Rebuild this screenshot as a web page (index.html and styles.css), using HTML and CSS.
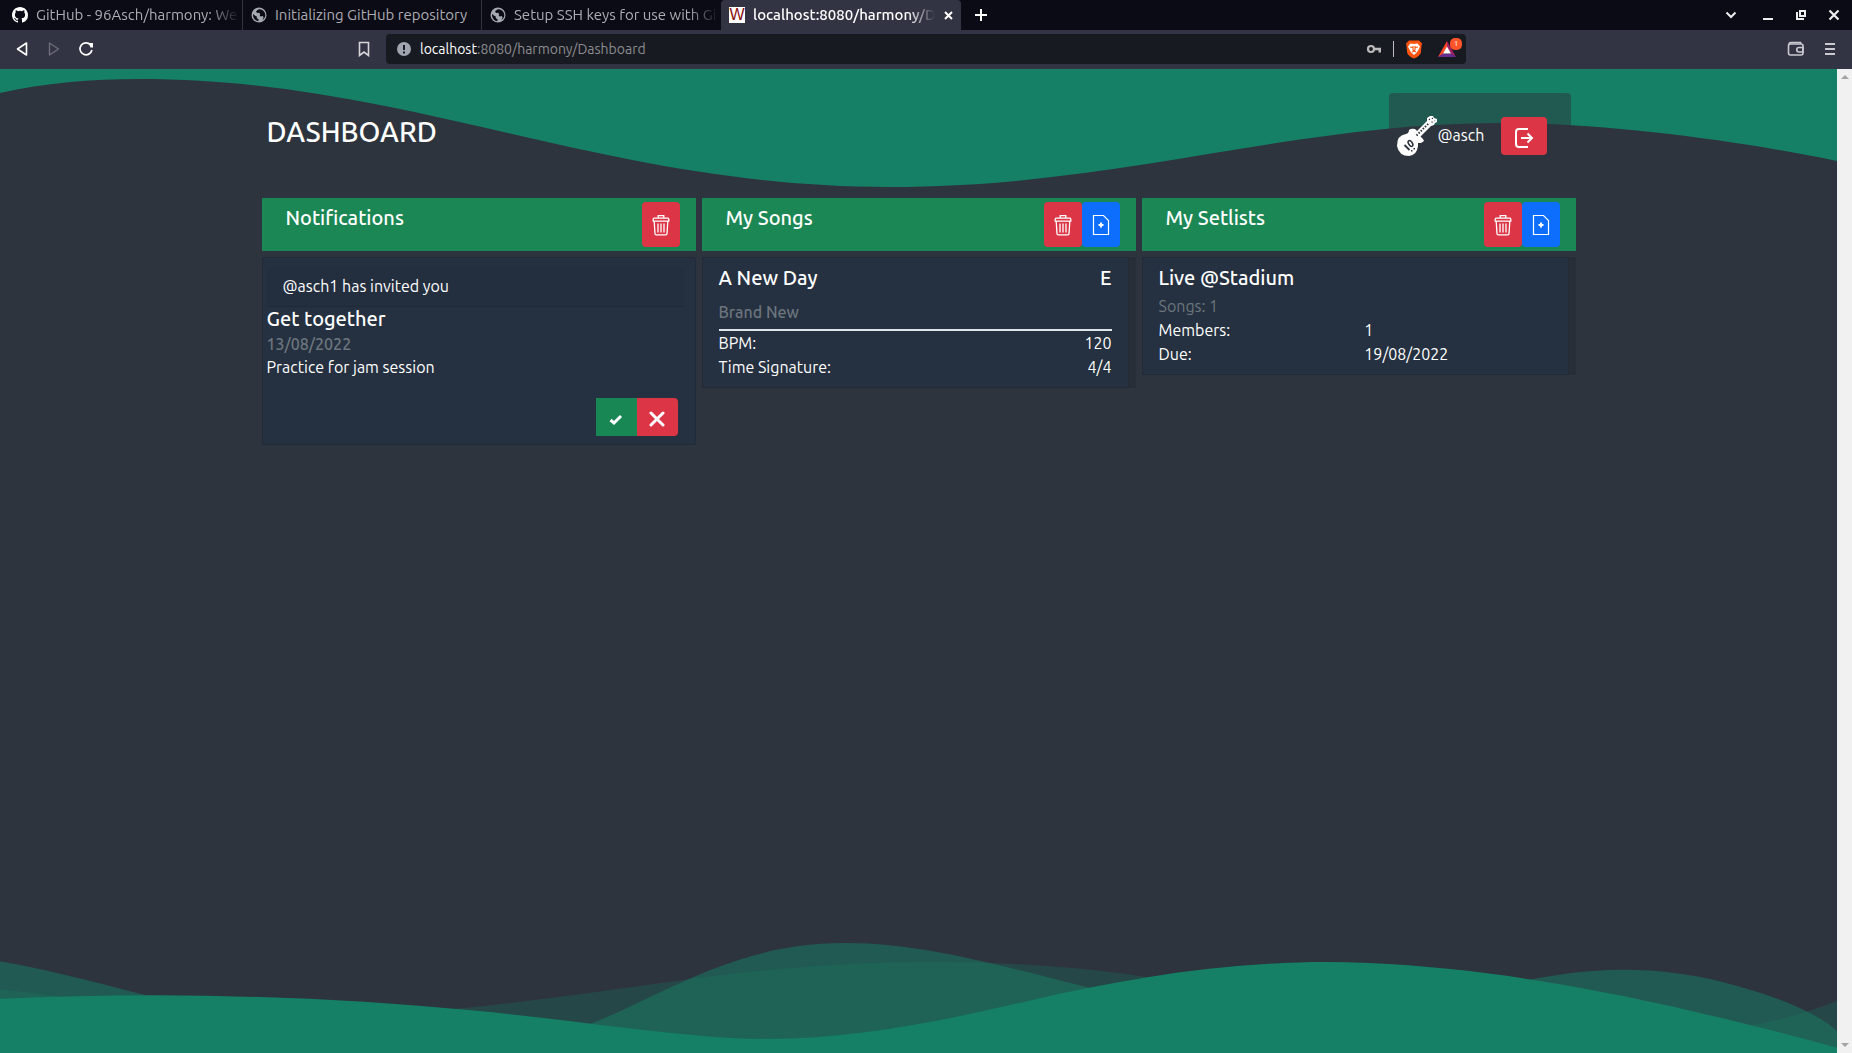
FILE: index.html
```html
<!DOCTYPE html>
<html lang="en">
<head>
<meta charset="utf-8">
<title>localhost:8080/harmony/Dashboard</title>
<link rel="stylesheet" href="styles.css">
</head>
<body>
<svg class="sprite" aria-hidden="true">
  <symbol id="globe" viewBox="0 0 16 16"><circle cx="8" cy="8" r="7.5" fill="#a4a8b2"/><path fill="#0b0b15" d="M8.500 2.200C7 2.500 5.300 3.600 5 4.800L6.300 6.100L8.200 5.700L9.200 7.200L8.700 8.700L10 9.600L11.800 9L12.600 10.400L11.500 12.900C13.300 11.700 14.300 9.900 14.300 8C14.300 5.100 12 2.400 8.500 2.200ZM2 7C1.700 10.700 4 13.600 7.300 14.300L7.500 12.300L5.800 11.200L5.800 9.500L4.200 8.800Z"/></symbol>
  <symbol id="trash" viewBox="0 0 20 24"><g fill="none" stroke="#fff" stroke-width="1.300"><path d="M3.200 8.500L4 20.800Q4.100 21.800 5.200 21.800H14.800Q15.900 21.800 16 20.800L16.800 8.500M3 5.200H17Q17.800 5.200 17.800 6.200V8.200H2.200V6.200Q2.200 5.200 3 5.200ZM7.200 5V2.700H12.800V5M7 10.500V19.500M10 10.500V19.500M13 10.500V19.500"/></g></symbol>
  <symbol id="newfile" viewBox="0 0 20 24"><path fill="none" stroke="#fff" stroke-width="1.200" d="M2.500 2.500H12.500L17.500 7.500V21.500H2.500Z"/><path stroke="#fff" stroke-width="2" d="M7.500 12H12.500M10 9.500V14.500"/></symbol>
</svg>
<div class="browser">
  <nav class="tabs" aria-label="Browser tabs">
    <button class="tab"><svg width="16" height="16" viewBox="0 0 16 16"><path fill="#fff" d="M8 0C3.580 0 0 3.580 0 8c0 3.540 2.290 6.530 5.470 7.590.4.070.55-.17.55-.38 0-.19-.01-.82-.01-1.490-2.010.37-2.530-.49-2.690-.94-.09-.23-.48-.94-.82-1.130-.28-.15-.68-.52-.01-.53.63-.01 1.080.58 1.230.82.72 1.210 1.870.87 2.330.66.07-.52.28-.87.51-1.070-1.780-.2-3.640-.89-3.640-3.950 0-.87.31-1.590.82-2.150-.08-.2-.36-1.020.08-2.120 0 0 .67-.21 2.200.82a7.600 7.600 0 0 1 4 0c1.530-1.040 2.200-.82 2.200-.82.44 1.100.16 1.920.08 2.120.51.56.82 1.270.82 2.150 0 3.070-1.870 3.750-3.650 3.950.29.25.54.73.54 1.480 0 1.070-.01 1.930-.01 2.200 0 .21.15.46.55.38A8 8 0 0 0 16 8c0-4.420-3.580-8-8-8Z"/></svg><span class="fade">GitHub - 96Asch/harmony: We</span></button>
    <button class="tab"><svg width="16" height="16"><use href="#globe"/></svg><span>Initializing GitHub repository</span></button>
    <button class="tab last"><svg width="16" height="16"><use href="#globe"/></svg><span class="fade">Setup SSH keys for use with Gi</span></button>
    <button class="tab active"><i class="wicon">W</i><span class="fade">localhost:8080/harmony/D</span><svg width="11" height="11" viewBox="0 0 11 11" stroke="#fff" stroke-width="2"><path d="M2 2L9 9M9 2L2 9"/></svg></button>
    <button class="icon-btn plus" aria-label="New tab"><svg width="12" height="12" viewBox="0 0 12 12" stroke="#fff" stroke-width="2"><path d="M6 0V12M0 6H12"/></svg></button>
    <div class="window-controls">
      <button class="icon-btn" aria-label="Search tabs"><svg width="12" height="12" viewBox="0 0 12 12" fill="none" stroke="#eee" stroke-width="2"><path d="M1.500 3.500L6 8L10.500 3.500"/></svg></button>
      <button class="icon-btn" aria-label="Minimize"><svg width="12" height="12" viewBox="0 0 12 12"><path fill="#eee" d="M1 9H11V11H1Z"/></svg></button>
      <button class="icon-btn" aria-label="Restore"><svg width="12" height="12" viewBox="0 0 12 12" fill="none" stroke="#eee" stroke-width="2"><path d="M5 2H10V7H5ZM2 3V10H9"/></svg></button>
      <button class="icon-btn" aria-label="Close"><svg width="12" height="12" viewBox="0 0 12 12" stroke="#eee" stroke-width="2.200"><path d="M1.500 1.500L10.500 10.500M10.500 1.500L1.500 10.500"/></svg></button>
    </div>
  </nav>
  <div class="toolbar">
    <div class="nav-buttons">
      <button class="icon-btn" aria-label="Back"><svg width="16" height="16" viewBox="0 0 16 16" fill="none" stroke="#fff" stroke-width="1.600" stroke-linejoin="round"><path d="M12.500 2V14L3.500 8Z"/></svg></button>
      <button class="icon-btn" aria-label="Forward"><svg width="16" height="16" viewBox="0 0 16 16" fill="none" stroke="#6c6d78" stroke-width="1.400" stroke-linejoin="round"><path d="M3.500 2V14L12.500 8Z"/></svg></button>
      <button class="icon-btn" aria-label="Reload"><svg width="16" height="16" viewBox="0 0 16 16" fill="none" stroke="#fff" stroke-width="1.700"><path d="M12.500 3.800A6 6 0 1 0 13.900 9"/><path fill="#fff" stroke="none" d="M10.500 2H15V6.500H12.500Z"/></svg></button>
    </div>
    <button class="icon-btn bookmark" aria-label="Bookmark"><svg width="16" height="16" viewBox="0 0 16 16" fill="none" stroke="#d5d5da" stroke-width="1.600"><path d="M3.500 1.500H12.500V14.500L8 11L3.500 14.500Z"/></svg></button>
    <div class="address">
      <svg width="14" height="14" viewBox="0 0 14 14"><circle cx="7" cy="7" r="7" fill="#a0a4ae"/><path fill="#181a21" d="M6 3H8V8H6ZM6 9.500H8V11.500H6Z"/></svg>
      <div class="url"><b>localhost</b>:8080/harmony/Dashboard</div>
      <div class="address-icons">
        <svg width="16" height="16" viewBox="0 0 16 16"><circle cx="5" cy="8" r="3" fill="none" stroke="#bbb" stroke-width="2.200"/><path fill="#bbb" d="M8 6.800H15V11.500H12.500V9.200H8Z"/></svg>
        <span class="divider"></span>
        <svg width="18" height="20" viewBox="0 0 18 20"><path fill="#fb5410" d="M4 1.500H14L17 4.500L16.500 7L15.800 14Q14 17.500 9 19.500Q4 17.500 2.200 14L1.500 7L1 4.500Z"/><path fill="#fff" d="M5.500 4.500L9 5L12.500 4.500L15 7.500L12.800 12L11.200 14L9 16L6.800 14L5.200 12L3 7.500Z"/><path fill="none" stroke="#fb5410" stroke-width="1.100" d="M5 8L7.500 8.500M13 8L10.500 8.500M8 7V11L9 12L10 11V7M7 13L9 12L11 13"/></svg>
        <span class="bat"><svg width="20" height="18" viewBox="0 0 20 18"><path fill="#ff4724" d="M10 1L1 17L6 14L10 7Z"/><path fill="#9e1f63" d="M10 1L19 17L14 14L10 7Z"/><path fill="#662d91" d="M1 17H19L14 13.500H6Z"/><path fill="#fff" d="M10 6.500L14 13.500H6Z"/></svg><span class="badge">1</span></span>
      </div>
    </div>
    <div class="menu">
      <button class="icon-btn" aria-label="Wallet"><svg width="18" height="16" viewBox="0 0 18 16" fill="none" stroke="#c9c9d0" stroke-width="1.600"><rect x="1.500" y="3" width="14.500" height="11" rx="2"/><path d="M2 4Q2 1.500 4 1.500H13.500V3M16 6.500H12A2.200 2.200 0 0 0 12 11H16Z"/></svg></button>
      <button class="icon-btn" aria-label="Menu"><svg width="16" height="14" viewBox="0 0 16 14"><path fill="#c9c9d0" d="M3 1H13V3H3ZM3 6H13V8H3ZM3 11H13V13H3Z"/></svg></button>
    </div>
  </div>
</div>
<div class="viewport">
  <main class="page">
    <svg class="wave wave-top" viewBox="0 0 1837 120" preserveAspectRatio="none" fill="#158065"><path d="M0 0V24C45 14 90 10 140 10C410 10 600 118 890 118C1120 118 1290 54 1500 54C1610 54 1740 72 1837 92V0Z"/></svg>
    <svg class="wave wave-bottom" viewBox="0 0 1200 120" preserveAspectRatio="none" fill="#158065"><path opacity=".25" d="M0,0V46.290c47.790,22.200,103.590,32.170,158,28,70.360-5.370,136.330-33.310,206.800-37.500C438.640,32.430,512.340,53.670,583,72.050c69.270,18,138.300,24.880,209.400,13.080,36.150-6,69.850-17.840,104.450-29.340C989.490,25,1113-14.290,1200,52.470V0Z"/><path opacity=".5" d="M0,0V15.810C13,36.920,27.640,56.860,47.690,72.050,99.410,111.270,165,111,224.580,91.580c31.150-10.150,60.090-26.070,89.670-39.800,40.920-19,84.730-46,130.830-49.670,36.260-2.850,70.900,9.420,98.600,31.560,31.770,25.390,62.320,62,103.630,73,40.440,10.790,81.350-6.690,119.130-24.280s75.160-39,116.920-43.050c59.730-5.850,113.280,22.880,168.900,38.840,30.200,8.660,59,6.170,87.090-7.500,22.430-10.890,48-26.930,60.650-49.240V0Z"/><path d="M0,0V5.630C149.930,59,314.090,71.320,475.830,42.570c43-7.640,84.230-20.120,127.610-26.460,59-8.630,112.480,12.240,165.560,35.400C827.930,77.220,886,95.240,951.200,90c86.530-7,172.070-45.710,248.800-84.810V0Z"/></svg>
    <div class="container">
      <header class="top">
        <h1>DASHBOARD</h1>
        <div class="user">
          <svg width="40" height="40" viewBox="0 0 40 40"><path fill="#fff" d="M33 0L36 0L37 2L40 3L40 6L38 7L37 9L34 10L23.500 20.500L26 23L27 25L24 27L21 27L21 30Q20 39 12 40Q2 40 0 30Q0 19 9 18Q12 17 12 14Q14 12 18 13L20 15L30 5L30 2Z"/><path stroke="#2d343e" stroke-width="2" stroke-dasharray="1.500 1.500" d="M19.500 19.500L31.500 7.500"/><path stroke="#2d343e" stroke-width="1.200" stroke-dasharray="1.200 2.500" d="M32 3L37 8M35 2L38 5"/><path stroke="#2d343e" stroke-width="1.800" d="M7.500 29L12.500 34"/><ellipse cx="13.500" cy="27.500" rx="1.800" ry="3.200" transform="rotate(-35 13.500 27.500)" fill="none" stroke="#2d343e" stroke-width="1.500"/><path fill="#2d343e" d="M14 34H15.500V35.500H14ZM16.500 32H18V33.500H16.500Z"/></svg>
          <span>@asch</span>
          <button class="btn red logout" aria-label="Log out"><svg width="20" height="22" viewBox="0 0 20 22" fill="none" stroke="#fff" stroke-width="2"><path d="M14 2H5Q2 2 2 5V17Q2 20 5 20H14M7 11H18M13.500 6.500L18 11L13.500 15.500"/></svg></button>
        </div>
      </header>
      <div class="columns">
        <section>
          <div class="col-head"><h2>Notifications</h2><button class="btn red" aria-label="Delete notifications"><svg width="20" height="24"><use href="#trash"/></svg></button></div>
          <article class="card notice">
            <p class="invite">@asch1 has invited you</p>
            <h3>Get together</h3>
            <p class="muted date">13/08/2022</p>
            <p class="desc">Practice for jam session</p>
            <div class="actions"><button class="btn green" aria-label="Accept"><svg width="14" height="14" viewBox="0 0 14 14" fill="none" stroke="#fff" stroke-width="3"><path d="M1.500 8L5 11L12 4"/></svg></button><button class="btn red" aria-label="Decline"><svg width="16" height="16" viewBox="0 0 16 16" stroke="#fff" stroke-width="3" stroke-linecap="round"><path d="M2 2L14 14M14 2L2 14"/></svg></button></div>
          </article>
        </section>
        <section>
          <div class="col-head"><h2>My Songs</h2><button class="btn red" aria-label="Delete songs"><svg width="20" height="24"><use href="#trash"/></svg></button><button class="btn blue" aria-label="Add song"><svg width="20" height="24"><use href="#newfile"/></svg></button></div>
          <div class="slot"><article class="card song">
            <h3><span>A New Day</span><span>E</span></h3>
            <p class="muted artist">Brand New</p>
            <dl><dt>BPM:</dt><dd>120</dd><dt>Time Signature:</dt><dd>4/4</dd></dl>
          </article></div>
        </section>
        <section>
          <div class="col-head"><h2>My Setlists</h2><button class="btn red" aria-label="Delete setlists"><svg width="20" height="24"><use href="#trash"/></svg></button><button class="btn blue" aria-label="Add setlist"><svg width="20" height="24"><use href="#newfile"/></svg></button></div>
          <div class="slot"><article class="card setlist">
            <h3>Live @Stadium</h3>
            <p class="muted">Songs: 1</p>
            <dl><dt>Members:</dt><dd>1</dd><dt>Due:</dt><dd>19/08/2022</dd></dl>
          </article></div>
        </section>
      </div>
    </div>
  </main>
  <div class="scrollbar" aria-hidden="true"><svg width="8" height="4" viewBox="0 0 8 4"><path fill="#a3a3a3" d="M0 4L4 0L8 4Z"/></svg><svg width="8" height="4" viewBox="0 0 8 4"><path fill="#a3a3a3" d="M0 0L4 4L8 0Z"/></svg></div>
</div>
</body>
</html>
```
FILE: styles.css
```css
* { box-sizing: border-box; }
body {
  margin: 0;
  height: 100vh;
  display: flex;
  flex-direction: column;
  overflow: hidden;
  font-family: Ubuntu, "Noto Sans", sans-serif;
  font-size: 16px;
  line-height: 24px;
  color: #fff;
  background: #2d343e;
}
h1, h2, h3, p, dl, dd { margin: 0; }
h1, h2, h3 { font-weight: 500; }
button { border: 0; padding: 0; background: none; color: inherit; font: inherit; }
svg { display: block; flex: none; }
.sprite { position: absolute; width: 0; height: 0; }

/* browser chrome */
.tabs { display: flex; height: 30px; background: #0b0b15; }
.tab {
  display: flex;
  align-items: center;
  gap: 8px;
  flex: 0 1 239px;
  min-width: 0;
  padding: 0 2px 0 8px;
  border-right: 1px solid #33343c;
  font-size: 15px;
  color: #adadb3;
}
.tab:first-child { flex-basis: 243px; padding-left: 12px; }
.tab.last { border-right: 0; }
.tab span { flex: 1; overflow: hidden; white-space: nowrap; text-align: left; }
.fade { -webkit-mask-image: linear-gradient(to right, #000 85%, transparent); mask-image: linear-gradient(to right, #000 85%, transparent); }
.tab.active {
  flex-basis: 240px;
  padding-right: 7px;
  border: 0;
  border-radius: 4px 4px 0 0;
  background: #323443;
  color: #fff;
  font-weight: 500;
}
.wicon {
  width: 16px;
  height: 16px;
  background: #fff;
  color: #8b1010;
  font: 16px/16px "Liberation Sans", sans-serif;
  text-align: center;
}
.icon-btn { display: flex; align-items: center; justify-content: center; }
.plus { width: 40px; }
.window-controls { display: flex; gap: 21px; margin-left: auto; padding-right: 12px; }
.window-controls .icon-btn:first-child { margin-right: 4px; }
.toolbar { display: flex; align-items: center; height: 39px; padding: 0 8px 1px; background: #323443; }
.nav-buttons { display: flex; gap: 16px; padding-left: 6px; }
.bookmark { margin-left: 262px; }
.address {
  display: flex;
  align-items: center;
  gap: 9px;
  flex: 0 1 1080px;
  height: 30px;
  margin: 0 auto 0 14px;
  padding: 0 4px 0 11px;
  border-radius: 4px;
  background: #181a21;
}
.url { flex: 1; font-size: 14px; color: #8c8d90; }
.url b { font-weight: 400; color: #fff; }
.address-icons { display: flex; align-items: center; gap: 11px; }
.divider { width: 1px; height: 16px; background: #c0c0c4; }
.bat { position: relative; width: 28px; padding-left: 3px; }
.badge {
  position: absolute;
  top: -2px;
  right: 0;
  width: 12px;
  height: 12px;
  border-radius: 5px;
  background: #fb542b;
  font-size: 8px;
  line-height: 12px;
  text-align: center;
}
.menu { display: flex; gap: 17px; padding-right: 6px; }

/* page */
.viewport { flex: 1; display: flex; min-height: 0; }
.page { position: relative; flex: 1; overflow: hidden; }
.wave { position: absolute; height: 120px; }
.wave-top { top: 0; left: 0; width: 100%; }
.wave-bottom { right: 0; bottom: 0; width: 123%; transform: scaleY(-1); }
.scrollbar {
  display: flex;
  flex-direction: column;
  justify-content: space-between;
  align-items: center;
  width: 15px;
  padding: 6px 0;
  background: #f1f1f1;
}
.container { position: relative; max-width: 1314px; margin: 0 auto; padding-top: 24px; }
.top { display: flex; justify-content: space-between; height: 105px; padding: 0 5px; }
h1 { padding-top: 20px; font-size: 28px; line-height: 38px; }
.user {
  display: flex;
  align-items: center;
  gap: 1px;
  width: 182px;
  height: 86px;
  padding: 0 24px 0 8px;
  border-radius: 4px;
  background: rgba(45, 52, 62, .5);
}
.user span { padding-bottom: 3px; }
.logout { width: 46px; height: 38px; margin-left: auto; padding-top: 4px; }
.btn { display: flex; align-items: center; justify-content: center; border-radius: 4px; }
.red { background: #dc3545; }
.green { background: #198754; }
.blue { background: #0d6efd; }
.columns { display: grid; grid-template-columns: repeat(3, 1fr); align-items: start; gap: 6px; }
.col-head { display: flex; height: 53px; padding: 4px 16px 4px 24px; background: #1a8754; margin-bottom: 6px; }
h2 { flex: 1; font-size: 20px; line-height: 32px; }
.col-head .btn { width: 38px; height: 45px; }
h3 { font-size: 20px; line-height: 24px; }
.muted { color: #6c757d; }
.card { border: 1px solid #212a37; border-radius: 2px; background: #253040; }
.slot { padding-right: 7px; background: #282e37; }
.notice { padding: 8px 11px 8px 4px; }
.invite { padding: 8px 16px; border-bottom: 1px solid #1f2937; background: #232e3e; }
.date { font-weight: 500; line-height: 26px; }
.notice .desc { line-height: 20px; }
.actions { display: flex; justify-content: flex-end; padding: 21px 6px 0 0; }
.actions .btn { width: 41px; height: 38px; padding-top: 4px; }
.actions .green { border-radius: 0; }
.actions .red { border-radius: 0 4px 4px 0; }
.song, .setlist { padding: 8px 16px; }
.song h3, .setlist h3 { display: flex; justify-content: space-between; margin-bottom: 4px; }
.artist { padding: 4px 0 3px; border-bottom: 2px solid #dfe5ea; font-weight: 500; line-height: 28px; }
dl { display: grid; }
.song dl { grid-template-columns: auto auto; }
.song dd { text-align: right; }
.setlist dl { grid-template-columns: 11fr 10fr; }
```
